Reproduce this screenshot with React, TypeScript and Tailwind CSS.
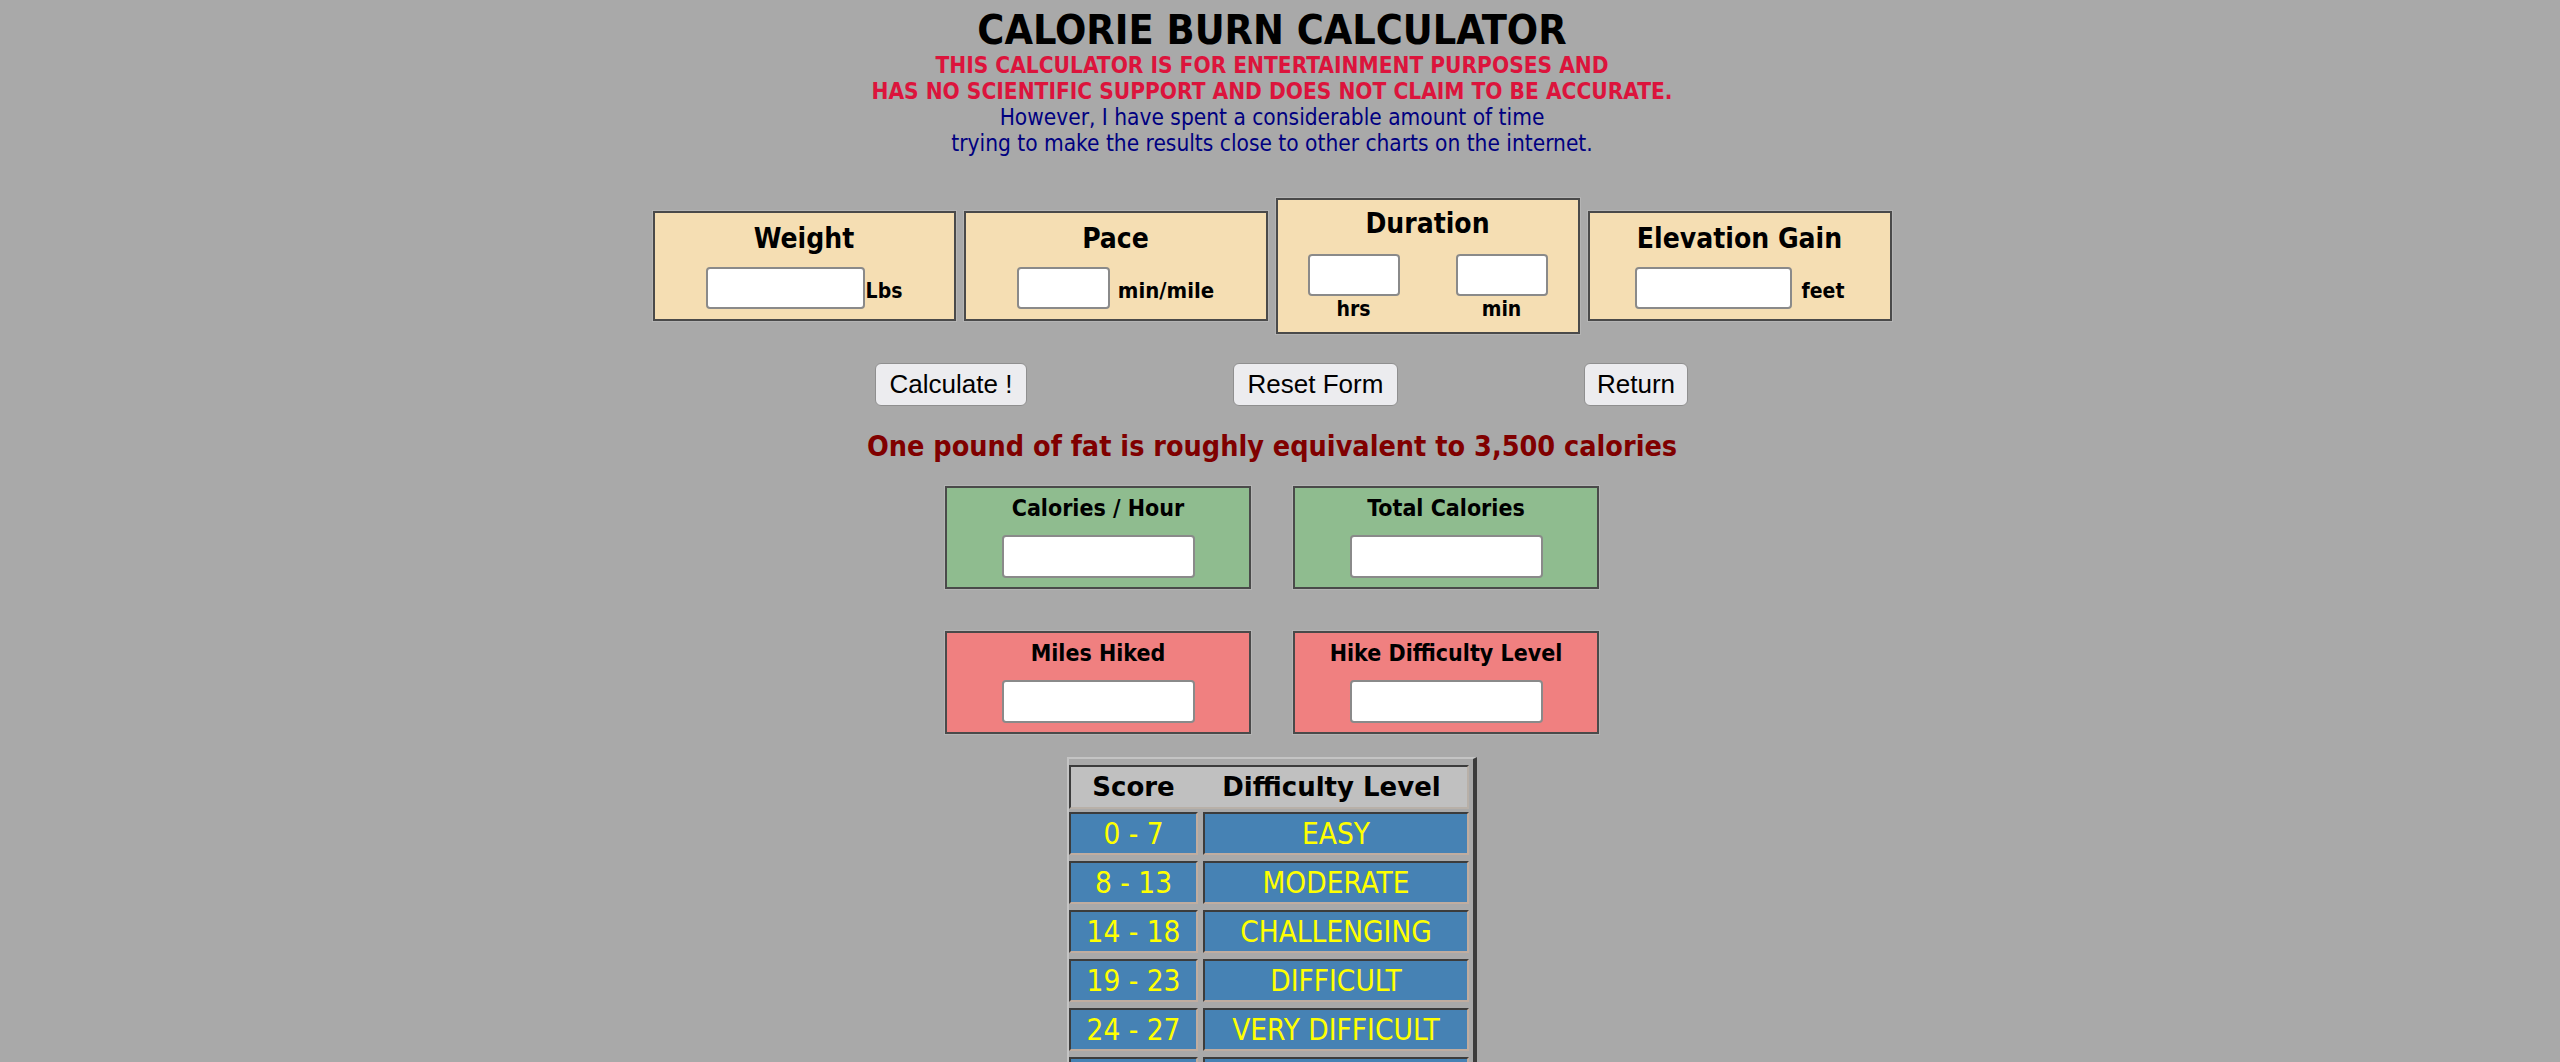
import { useState } from 'react'

const condensed = "font-['DejaVu_Sans_Condensed','DejaVu_Sans',sans-serif]"

type Level = { score: string; level: string }

const levels: Level[] = [
  { score: '0 - 7', level: 'EASY' },
  { score: '8 - 13', level: 'MODERATE' },
  { score: '14 - 18', level: 'CHALLENGING' },
  { score: '19 - 23', level: 'DIFFICULT' },
  { score: '24 - 27', level: 'VERY DIFFICULT' },
  // last row sits below the fold, only its top edge shows
  { score: '', level: '' },
]

function Field({ width, value, onChange }: { width: string; value: string; onChange: (v: string) => void }) {
  return (
    <input
      type="text"
      value={value}
      onChange={(event) => onChange(event.target.value)}
      className={`${width} h-[42px] rounded-[4px] border-2 border-[#8a8a8a] bg-white px-1 text-[20px] outline-none`}
    />
  )
}

function ResultBox({ title, tone }: { title: string; tone: 'green' | 'red' }) {
  return (
    <div
      className={`flex h-[103px] w-[306px] flex-col items-center border-2 border-[#4a4a4a] pt-[6px] shadow-[0_0_0_1px_#b4b4b4] ${
        tone === 'green' ? 'bg-[#8fbc8f]' : 'bg-[#f08080]'
      }`}
    >
      <div className="text-[23px] font-bold leading-[28px] text-black">{title}</div>
      <input readOnly className="mt-[13px] h-[43px] w-[193px] rounded-[4px] border-2 border-[#8a8a8a] bg-white outline-none" />
    </div>
  )
}

export default function App() {
  const [weight, setWeight] = useState('')
  const [pace, setPace] = useState('')
  const [hrs, setHrs] = useState('')
  const [mins, setMins] = useState('')
  const [gain, setGain] = useState('')

  function resetForm(): void {
    setWeight('')
    setPace('')
    setHrs('')
    setMins('')
    setGain('')
  }

  return (
    <div className={`h-[1062px] overflow-hidden bg-[#a9a9a9] pr-[16px] ${condensed}`}>
      <div className="flex flex-col items-center">
        <h1 className="mt-[10px] text-[41px] font-bold leading-[40px] text-black">CALORIE BURN CALCULATOR</h1>
        <p className="mt-[2px] text-center text-[22.5px] font-bold leading-[26px] text-[#dc143c]">
          THIS CALCULATOR IS FOR ENTERTAINMENT PURPOSES AND
          <br />
          HAS NO SCIENTIFIC SUPPORT AND DOES NOT CLAIM TO BE ACCURATE.
        </p>
        <p className="text-center text-[22.5px] leading-[26px] text-[#000080]">
          However, I have spent a considerable amount of time
          <br />
          trying to make the results close to other charts on the internet.
        </p>

        {/* inputs */}
        <div className="mt-[42px] flex items-center gap-[8px] text-black">
          <div className="flex h-[110px] w-[303px] flex-col items-center border-2 border-[#4a4a4a] bg-[#f5deb3] pt-[10px] shadow-[0_0_0_1px_#b4b4b4]">
            <div className="text-[28px] font-bold leading-[32px]">Weight</div>
            <div className="mt-[12px] flex items-end">
              <Field width="w-[159px]" value={weight} onChange={setWeight} />
              <span className="mb-[6px] ml-[1px] text-[21px] font-bold leading-[24px]">Lbs</span>
            </div>
          </div>
          <div className="flex h-[110px] w-[304px] flex-col items-center border-2 border-[#4a4a4a] bg-[#f5deb3] pt-[10px] shadow-[0_0_0_1px_#b4b4b4]">
            <div className="text-[28px] font-bold leading-[32px]">Pace</div>
            <div className="mt-[12px] flex items-end">
              <Field width="w-[93px]" value={pace} onChange={setPace} />
              <span className="mb-[6px] ml-[8px] text-[22px] font-bold leading-[24px]">min/mile</span>
            </div>
          </div>
          <div className="flex h-[136px] w-[304px] flex-col items-center border-2 border-[#4a4a4a] bg-[#f5deb3] pt-[8px] shadow-[0_0_0_1px_#b4b4b4]">
            <div className="text-[28px] font-bold leading-[32px]">Duration</div>
            <div className="mt-[14px] flex gap-[56px]">
              <div className="flex flex-col items-center">
                <Field width="w-[92px]" value={hrs} onChange={setHrs} />
                <span className="mt-[3px] text-[21px] font-bold leading-[20px]">hrs</span>
              </div>
              <div className="flex flex-col items-center">
                <Field width="w-[92px]" value={mins} onChange={setMins} />
                <span className="mt-[3px] text-[21px] font-bold leading-[20px]">min</span>
              </div>
            </div>
          </div>
          <div className="flex h-[110px] w-[304px] flex-col items-center border-2 border-[#4a4a4a] bg-[#f5deb3] pt-[10px] shadow-[0_0_0_1px_#b4b4b4]">
            <div className="text-[28px] font-bold leading-[32px]">Elevation Gain</div>
            <div className="mt-[12px] flex items-end">
              <Field width="w-[157px]" value={gain} onChange={setGain} />
              <span className="mb-[6px] ml-[10px] text-[21px] font-bold leading-[24px]">feet</span>
            </div>
          </div>
        </div>

        {/* buttons */}
        <div className="mt-[29px] flex pl-[19px] font-['Liberation_Sans',sans-serif] text-[26px] text-black">
          <button className="h-[43px] w-[152px] rounded-[6px] border border-[#8f8f8f] bg-[#ececef]">Calculate !</button>
          <button onClick={resetForm} className="ml-[206px] h-[43px] w-[165px] rounded-[6px] border border-[#8f8f8f] bg-[#ececef]">
            Reset Form
          </button>
          <button className="ml-[186px] h-[43px] w-[104px] rounded-[6px] border border-[#8f8f8f] bg-[#ececef]">Return</button>
        </div>

        <p className="mt-[25px] text-[28.5px] font-bold leading-[32px] text-[#800000]">
          One pound of fat is roughly equivalent to 3,500 calories
        </p>

        {/* results */}
        <div className="mt-[23px] flex gap-[42px]">
          <ResultBox title="Calories / Hour" tone="green" />
          <ResultBox title="Total Calories" tone="green" />
        </div>
        <div className="mt-[42px] flex gap-[42px]">
          <ResultBox title="Miles Hiked" tone="red" />
          <ResultBox title="Hike Difficulty Level" tone="red" />
        </div>

        {/* difficulty chart */}
        <div className="mt-[23px] border-b-4 border-l-2 border-r-4 border-t-2 border-b-[#3c3c3c] border-l-[#c4c4c4] border-r-[#3c3c3c] border-t-[#c4c4c4] pr-[4px] pt-[6px]">
          <div className="flex h-[44px] w-[400px] items-center border-2 border-b-[#b8b0a8] border-l-[#3c3c3c] border-r-[#b8b0a8] border-t-[#3c3c3c] bg-[#c0c0c0] font-['DejaVu_Sans',sans-serif] text-[26px] font-bold text-black">
            <span className="w-[125px] text-center">Score</span>
            <span className="flex-1 text-center">Difficulty Level</span>
          </div>
          <div className="mt-[3px] flex flex-col gap-[6px]">
            {levels.map((row, index) => (
              <div key={index} className="flex gap-[5px] text-[29.5px] leading-[36px] text-[#ffff00]">
                <div className="flex h-[43px] w-[129px] items-center justify-center border-2 border-b-[#c0ada0] border-l-[#3c3c3c] border-r-[#c0ada0] border-t-[#3c3c3c] bg-[#4682b4]">
                  {row.score}
                </div>
                <div className="flex h-[43px] w-[266px] items-center justify-center border-2 border-b-[#c0ada0] border-l-[#3c3c3c] border-r-[#c0ada0] border-t-[#3c3c3c] bg-[#4682b4]">
                  {row.level}
                </div>
              </div>
            ))}
          </div>
        </div>
      </div>
    </div>
  )
}
